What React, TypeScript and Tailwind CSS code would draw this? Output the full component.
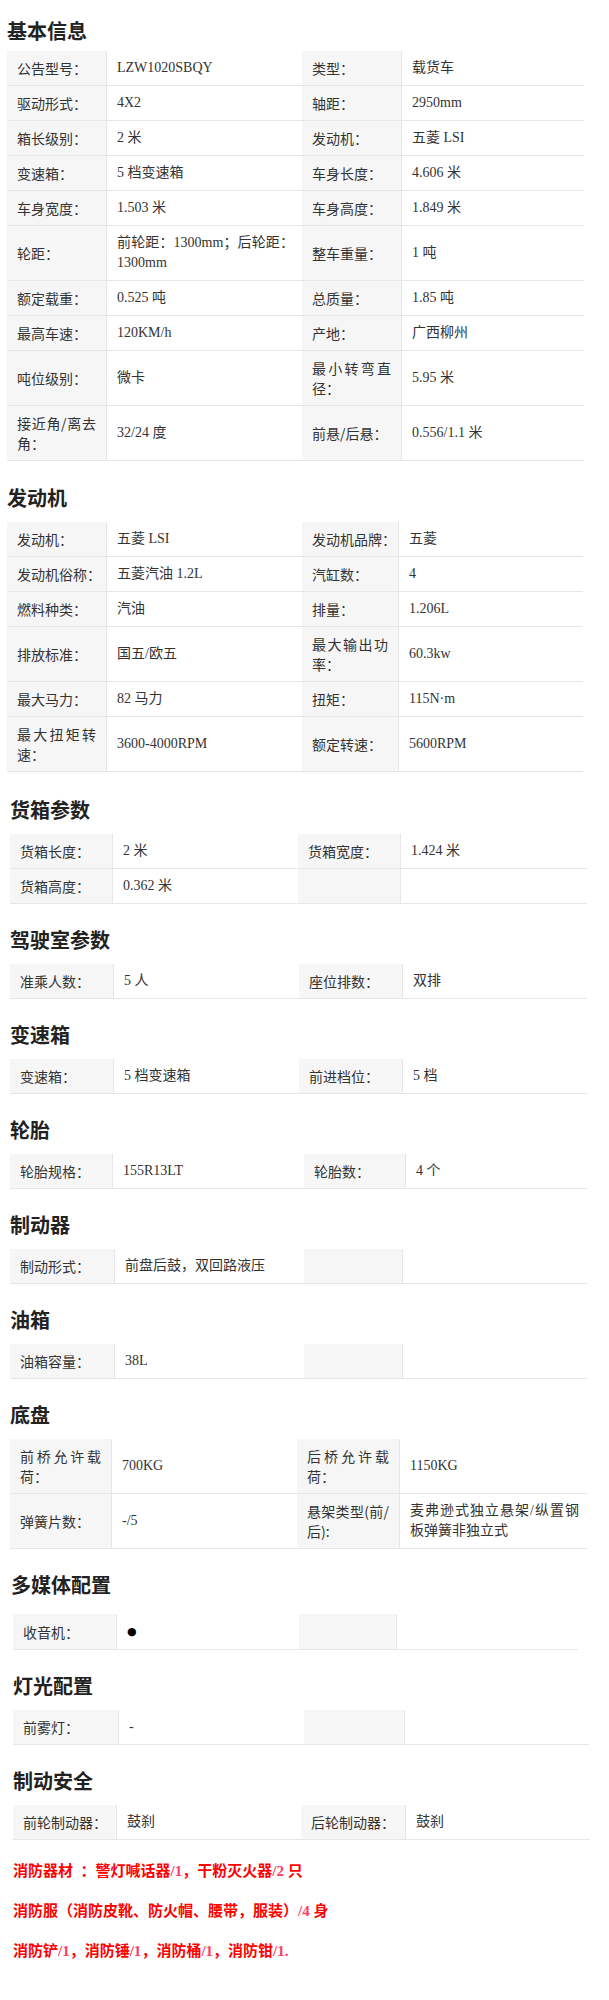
type Row = [string, string, string, string];

type Section = {
  title: string;
  head: string;
  box: string;
  cols: string;
  rows: Row[];
};

const sections: Section[] = [
  {
    title: "基本信息",
    head: "ml-[7px] mt-[17px] mb-[6px]",
    box: "ml-[7px]",
    cols: "grid-cols-[100px_195px_100px_182px]",
    rows: [
      ["公告型号：", "LZW1020SBQY", "类型：", "载货车"],
      ["驱动形式：", "4X2", "轴距：", "2950mm"],
      ["箱长级别：", "2 米", "发动机：", "五菱 LSI"],
      ["变速箱：", "5 档变速箱", "车身长度：", "4.606 米"],
      ["车身宽度：", "1.503 米", "车身高度：", "1.849 米"],
      ["轮距：", "前轮距：1300mm；后轮距：1300mm", "整车重量：", "1 吨"],
      ["额定载重：", "0.525 吨", "总质量：", "1.85 吨"],
      ["最高车速：", "120KM/h", "产地：", "广西柳州"],
      ["吨位级别：", "微卡", "最小转弯直径：", "5.95 米"],
      ["接近角/离去角：", "32/24 度", "前悬/后悬：", "0.556/1.1 米"],
    ],
  },
  {
    title: "发动机",
    head: "ml-[7px] mt-[23px] mb-[10px]",
    box: "ml-[7px]",
    cols: "grid-cols-[100px_195px_97px_184px]",
    rows: [
      ["发动机：", "五菱 LSI", "发动机品牌：", "五菱"],
      ["发动机俗称：", "五菱汽油 1.2L", "汽缸数：", "4"],
      ["燃料种类：", "汽油", "排量：", "1.206L"],
      ["排放标准：", "国五/欧五", "最大输出功率：", "60.3kw"],
      ["最大马力：", "82 马力", "扭矩：", "115N·m"],
      ["最大扭矩转速：", "3600-4000RPM", "额定转速：", "5600RPM"],
    ],
  },
  {
    title: "货箱参数",
    head: "ml-[10px] mt-[24px] mb-[10px]",
    box: "ml-[10px]",
    cols: "grid-cols-[103px_185px_103px_186px]",
    rows: [
      ["货箱长度：", "2 米", "货箱宽度：", "1.424 米"],
      ["货箱高度：", "0.362 米", "", ""],
    ],
  },
  {
    title: "驾驶室参数",
    head: "ml-[10px] mt-[22px] mb-[10px]",
    box: "ml-[10px]",
    cols: "grid-cols-[104px_185px_104px_184px]",
    rows: [["准乘人数：", "5 人", "座位排数：", "双排"]],
  },
  {
    title: "变速箱",
    head: "ml-[10px] mt-[22px] mb-[10px]",
    box: "ml-[10px]",
    cols: "grid-cols-[104px_185px_104px_184px]",
    rows: [["变速箱：", "5 档变速箱", "前进档位：", "5 档"]],
  },
  {
    title: "轮胎",
    head: "ml-[10px] mt-[22px] mb-[10px]",
    box: "ml-[10px]",
    cols: "grid-cols-[103px_191px_102px_181px]",
    rows: [["轮胎规格：", "155R13LT", "轮胎数：", "4 个"]],
  },
  {
    title: "制动器",
    head: "ml-[10px] mt-[22px] mb-[10px]",
    box: "ml-[10px]",
    cols: "grid-cols-[105px_189px_99px_184px]",
    rows: [["制动形式：", "前盘后鼓，双回路液压", "", ""]],
  },
  {
    title: "油箱",
    head: "ml-[10px] mt-[22px] mb-[10px]",
    box: "ml-[10px]",
    cols: "grid-cols-[105px_189px_99px_184px]",
    rows: [["油箱容量：", "38L", "", ""]],
  },
  {
    title: "底盘",
    head: "ml-[10px] mt-[22px] mb-[10px]",
    box: "ml-[10px]",
    cols: "grid-cols-[102px_185px_103px_187px]",
    rows: [
      ["前桥允许载荷：", "700KG", "后桥允许载荷：", "1150KG"],
      ["弹簧片数：", "-/5", "悬架类型(前/后):", "麦弗逊式独立悬架/纵置钢板弹簧非独立式"],
    ],
  },
  {
    title: "多媒体配置",
    head: "ml-[11px] mt-[22px] mb-[15px]",
    box: "ml-[13px]",
    cols: "grid-cols-[104px_182px_98px_181px]",
    rows: [["收音机：", "●", "", ""]],
  },
  {
    title: "灯光配置",
    head: "ml-[13px] mt-[22px] mb-[10px]",
    box: "ml-[13px]",
    cols: "grid-cols-[106px_185px_101px_184px]",
    rows: [["前雾灯：", "-", "", ""]],
  },
  {
    title: "制动安全",
    head: "ml-[13px] mt-[22px] mb-[10px]",
    box: "ml-[13px]",
    cols: "grid-cols-[104px_184px_105px_184px]",
    rows: [["前轮制动器：", "鼓刹", "后轮制动器：", "鼓刹"]],
  },
];

function Label({ text }: { text: string }) {
  // short labels stay on one line, long ones wrap and spread like the original
  const short = text.length <= 6;
  return (
    <div className="flex items-center bg-[#f6f6f6] border-b border-r border-[#e6e6e6] px-[10px] py-[7px] text-[14px] leading-[20px] text-[#333] font-['Noto_Sans_CJK_SC',sans-serif]">
      <div className={short ? "w-full whitespace-nowrap" : "w-full text-justify"}>{text}</div>
    </div>
  );
}

function Value({ text }: { text: string }) {
  return (
    <div className="flex items-center border-b border-[#e6e6e6] pl-[10px] pr-[8px] py-[7px] text-[14px] leading-[20px] text-[#333] font-['Liberation_Serif','Noto_Sans_CJK_SC',serif]">
      <div className="w-full text-justify">
        {text === "●" ? (
          <span className="text-[11px] text-black font-['DejaVu_Sans',sans-serif]">●</span>
        ) : (
          text
        )}
      </div>
    </div>
  );
}

function SpecTable({ section }: { section: Section }) {
  return (
    <div>
      <h2
        className={`${section.head} h-[28px] text-[20px] leading-[28px] font-bold text-[#222] font-['Noto_Sans_CJK_SC',sans-serif]`}
      >
        {section.title}
      </h2>
      <div className={`${section.box} grid ${section.cols}`}>
        {section.rows.map((r, i) => (
          <div key={i} className="contents">
            <Label text={r[0]} />
            <Value text={r[1]} />
            <Label text={r[2]} />
            <Value text={r[3]} />
          </div>
        ))}
      </div>
    </div>
  );
}

export default function App() {
  const num = "text-[#ff3b5f]";
  return (
    <div className="w-[609px] min-h-[2000px] bg-white">
      {sections.map((s) => (
        <SpecTable key={s.title} section={s} />
      ))}

      <div className="ml-[13px] text-[15px] leading-[20px] font-bold text-[#ff0000] font-['Liberation_Serif','Noto_Sans_CJK_SC',serif]">
        <p className="mt-[21px]">
          消防器材{"\u2002"}：警灯喊话器<span className={num}>/1</span>，干粉灭火器<span className={num}>/2 </span>只
        </p>
        <p className="mt-[20px]">
          消防服（消防皮靴、防火帽、腰带，服装）<span className={num}>/4 </span>身
        </p>
        <p className="mt-[20px]">
          消防铲<span className={num}>/1</span>，消防锤<span className={num}>/1</span>，消防桶
          <span className={num}>/1</span>，消防钳<span className={num}>/1.</span>
        </p>
      </div>
    </div>
  );
}
